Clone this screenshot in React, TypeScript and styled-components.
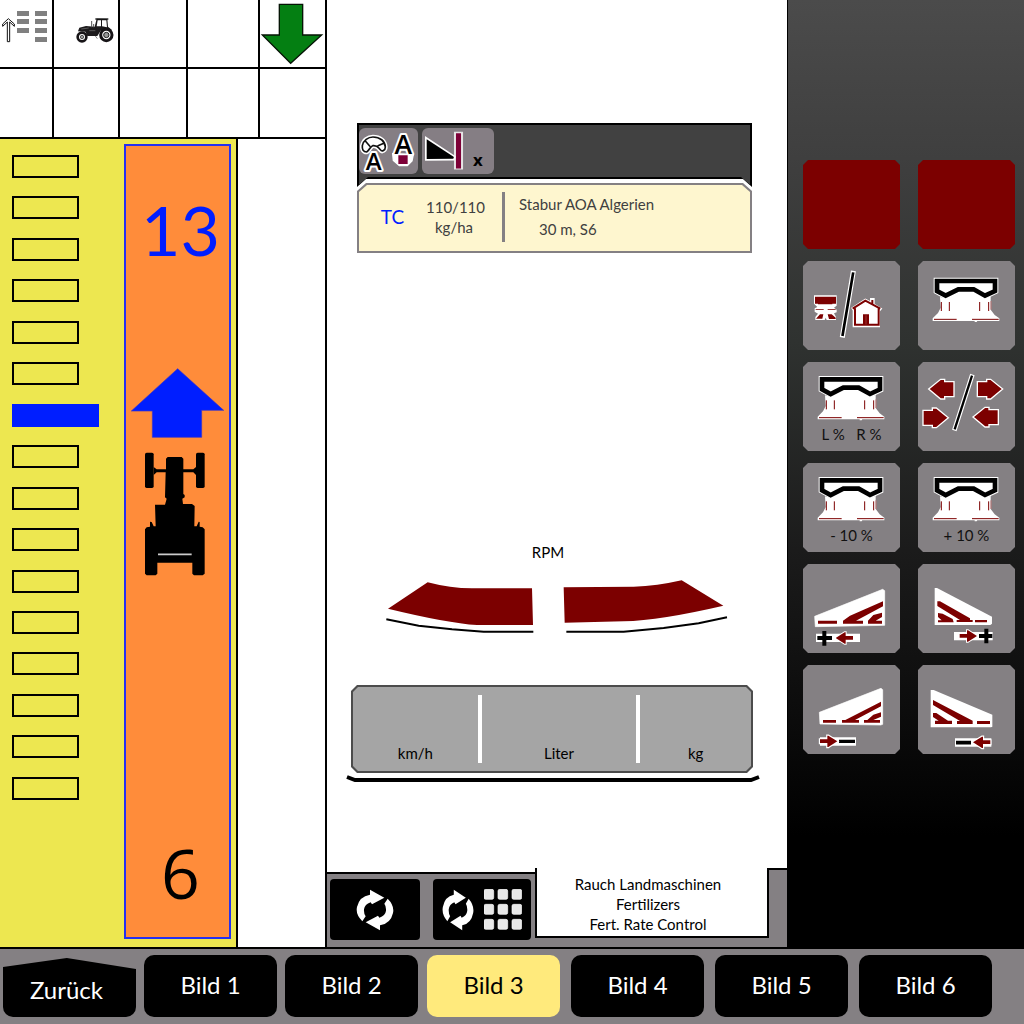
import React from 'react';
import styled, { createGlobalStyle, css } from 'styled-components';

const GlobalStyle = createGlobalStyle`
  * { box-sizing: border-box; }
  body { margin: 0; background: #fff; font-family: Lato, 'Open Sans', sans-serif; color: #000; }
  button { font: inherit; color: inherit; border: 0; padding: 0; margin: 0; cursor: pointer; }
  svg { display: block; }
  p, h2 { margin: 0; font-weight: 400; }
`;

const RED = '#7c0000';
const GREY = '#848083';
const BLUE = '#001eff';

const chamfer = (cut: number) => css`
  clip-path: polygon(
    ${cut}px 0, calc(100% - ${cut}px) 0, 100% ${cut}px, 100% calc(100% - ${cut}px),
    calc(100% - ${cut}px) 100%, ${cut}px 100%, 0 calc(100% - ${cut}px), 0 ${cut}px
  );
`;

const Screen = styled.div`
  min-height: 100vh;
  display: flex;
  flex-direction: column;
`;

const Main = styled.main`
  flex: 1;
  display: flex;
`;

/* ---------- left: status grid and field map ---------- */

const MapSide = styled.section`
  width: 327px;
  display: flex;
  flex-direction: column;
  border-right: 2px solid #000;
  border-bottom: 2px solid #000;
`;

const StatusGrid = styled.div`
  display: grid;
  grid-template-columns: 54px 66px 68px 72px 1fr;
  grid-template-rows: 69px 70px;
`;

const StatusCell = styled.div<{ $last?: boolean }>`
  display: flex;
  border-bottom: 2px solid #000;
  border-right: ${(p) => (p.$last ? '0' : '2px solid #000')};
`;

const StatusIcon = styled.svg`
  flex: none;
`;

const Field = styled.div`
  flex: 1;
  display: flex;
`;

const Track = styled.div`
  width: 238px;
  display: flex;
  padding: 5px 5px 8px 12px;
  background: #ede750;
  border-right: 2px solid #000;
`;

const Sections = styled.ul`
  list-style: none;
  margin: 0;
  padding: 11px 0 139px;
  width: 112px;
  display: flex;
  flex-direction: column;
  justify-content: space-between;
`;

const Section = styled.li<{ $active?: boolean }>`
  height: 23px;
  width: ${(p) => (p.$active ? 87 : 67)}px;
  border: 2px solid ${(p) => (p.$active ? BLUE : '#000')};
  background: ${(p) => (p.$active ? BLUE : 'transparent')};
`;

const Lane = styled.div`
  flex: 1;
  display: flex;
  flex-direction: column;
  align-items: center;
  background: #ff8c3a;
  border: 2px solid #2430f0;
  padding: 44px 0 24px;
`;

const LaneNumber = styled.span<{ $color: string; $font: string }>`
  color: ${(p) => p.$color};
  font-family: ${(p) => p.$font}, sans-serif;
  font-size: 68px;
  line-height: 80px;
  padding-left: 6px;
`;

const LaneArrow = styled.svg`
  margin-top: 98px;
`;

const LaneTractor = styled.svg`
  margin: 14px 6px 0 0;
`;

const Spacer = styled.div`
  flex: 1;
`;

/* ---------- centre: spreader ---------- */

const Work = styled.section`
  flex: 1;
  display: flex;
  flex-direction: column;
  background: #fff;
  border-right: 1px solid #000;
  border-bottom: 2px solid #000;
`;

const Job = styled.div`
  padding: 123px 35px 0 30px;
`;

const notch = css`
  clip-path: polygon(0 0, 100% 0, 100% 100%, calc(100% - 9px) calc(100% - 8px), 9px calc(100% - 8px), 0 100%);
`;

const ModeFrame = styled.div`
  background: #000;
  height: 64px;
  padding: 2px;
  ${notch}
`;

const ModeBar = styled.div`
  height: 100%;
  display: flex;
  gap: 4px;
  padding: 3px 0 0;
  background: #414141;
  ${notch}
`;

const ModeButton = styled.button`
  height: 46px;
  border-radius: 6px;
  background: #857e84;
`;

const ModeIcon = styled.svg`
  overflow: visible;
`;

const JobFrame = styled.div`
  margin-top: -4px;
  padding: 2px;
  background: ${GREY};
  clip-path: polygon(9px 0, calc(100% - 9px) 0, 100% 8px, 100% 100%, 0 100%, 0 8px);
`;

const JobCard = styled.div`
  display: flex;
  align-items: center;
  height: 66px;
  padding-bottom: 2px;
  background: #fef6cf;
  color: #404040;
  font-size: 15px;
  line-height: 20px;
  clip-path: polygon(8px 0, calc(100% - 8px) 0, 100% 7px, 100% 100%, 0 100%, 0 7px);
`;

const JobMode = styled.span`
  width: 67px;
  text-align: center;
  color: ${BLUE};
  font-size: 19px;
`;

const JobRate = styled.p`
  width: 56px;
  text-align: center;
`;

const JobRule = styled.div`
  width: 3px;
  height: 50px;
  margin: 0 14px 0 20px;
  background: ${GREY};
`;

const JobInfo = styled.div`
  line-height: 25px;
`;

const JobDetail = styled.p`
  padding-left: 20px;
`;

const Gauges = styled.div`
  padding: 0 27px 85px 19px;
  display: flex;
  flex-direction: column;
  align-items: center;
`;

const GaugeTitle = styled.h2`
  font-size: 15px;
  line-height: 20px;
  padding-right: 10px;
`;

const Blades = styled.svg`
  margin: 16px 0 49px 8px;
`;

const TotalsFrame = styled.div`
  width: calc(100% - 12px);
  margin-right: 2px;
  padding: 2px;
  background: #4c4c4c;
  ${chamfer(6)}
`;

const Totals = styled.div`
  display: flex;
  align-items: center;
  height: 84px;
  background: #a5a5a5;
  font-size: 15px;
  line-height: 20px;
  ${chamfer(5)}
`;

const Total = styled.span<{ $grow: number }>`
  flex: ${(p) => p.$grow} 1 0;
  align-self: flex-end;
  padding-bottom: 8px;
  text-align: center;
`;

const TotalRule = styled.div`
  width: 4px;
  height: 68px;
  background: #fff;
`;

const Base = styled.svg`
  width: 100%;
  height: 8px;
  margin-top: 2px;
`;

const Dock = styled.div`
  display: flex;
  align-items: flex-end;
`;

const DockTools = styled.div`
  display: flex;
  gap: 13px;
  height: 75px;
  padding: 5px 4px 7px 3px;
  background: ${GREY};
  border-top: 2px solid #000;
`;

const DockButton = styled.button<{ $width: number }>`
  width: ${(p) => p.$width}px;
  display: flex;
  align-items: center;
  justify-content: center;
  gap: 10px;
  background: #000;
  border-radius: 4px;
`;

const Implement = styled.div`
  flex: 1;
  height: 79px;
  padding-bottom: 9px;
  background: ${GREY};
`;

const ImplementText = styled.p`
  height: 70px;
  padding: 6px 8px 0 0;
  background: #fff;
  border: solid #000;
  border-width: 0 2px 2px;
  text-align: center;
  font-size: 15px;
  line-height: 20px;
`;

const DockEdge = styled.div`
  width: 18px;
  height: 79px;
  background: ${GREY};
  border-top: 2px solid #000;
`;

/* ---------- right: soft keys ---------- */

const SoftKeys = styled.aside`
  width: 236px;
  padding: 160px 9px 0 15px;
  background: linear-gradient(#4b4b4b 0%, #3e3e3e 18%, #2f3230 36%, #1b1b1b 58%, #0c0c0c 75%, #000 88%);
`;

const KeyGrid = styled.div`
  display: grid;
  grid-template-columns: 1fr 1fr;
  grid-auto-rows: 89px;
  gap: 12px 18px;
`;

const Key = styled.button<{ $alert?: boolean }>`
  display: flex;
  flex-direction: column;
  align-items: center;
  background: ${(p) => (p.$alert ? RED : GREY)};
  font-size: 15px;
  line-height: 20px;
  color: #111;
  ${chamfer(5)}
`;

const KeyLabel = styled.span`
  white-space: pre;
`;

/* ---------- bottom navigation ---------- */

const Tabs = styled.nav`
  height: 75px;
  display: flex;
  gap: 9px;
  padding: 6px 3px 7px;
  background: ${GREY};
`;

const TabGroup = styled.div<{ $gap: number }>`
  display: flex;
  gap: ${(p) => p.$gap}px;
`;

const Tab = styled.button<{ $active?: boolean; $back?: boolean }>`
  width: 133px;
  padding-bottom: 2px;
  font-size: 24px;
  line-height: 32px;
  border-radius: 10px;
  color: ${(p) => (p.$active ? '#000' : '#fff')};
  background: ${(p) => (p.$active ? '#ffea7c' : '#000')};
  ${(p) =>
    p.$back &&
    css`
      padding: 8px 6px 0 0;
      clip-path: polygon(0 12px, 48% 3px, 100% 14px, 100% 100%, 0 100%);
    `}
`;

/* ---------- drawings ---------- */

const KeyIcon = ({ height = 89, x = 0, y = 0, children }: { height?: number; x?: number; y?: number; children: React.ReactNode }) => (
  <svg width="97" height={height} viewBox={`${x} ${y} 291 ${height * 3}`} aria-hidden="true">
    {children}
  </svg>
);

const Spreader = () => (
  <g>
    <path d="M66 108 84 112 120 88H165L203 112 218 106V146L230 162 244 172V180H178L176 183H170V180H44V172L60 156 68 140Z" fill="#fff" />
    <path d="M57 60H231V90L201 104 167 85H121L83 104 57 90Z" fill="#fff" stroke="#fff" strokeWidth="20" />
    <path d="M57 60H231V90L201 104 167 85H121L83 104 57 90Z" fill="#fff" stroke="#000" strokeWidth="14" />
    <path d="M70 123V150M94 123V150M185 123V150M212 123V150M48 175H116M162 175H242" fill="none" stroke={RED} strokeWidth="3" />
    <path d="M219 120V146" stroke="#b77" strokeWidth="3" />
  </g>
);

const HomeIcon = () => (
  <KeyIcon x={39} y={332}>
    <path d="M72 435H140V466L132 472 140 478V486L132 489 138 500V509H110L107 502 104 509H76V500L84 490 74 484V474L82 470 72 460Z" fill="#fff" />
    <path d="M75 439H138V460H127V462H84V460H75ZM77 477H101V479H77ZM113 477H137V479H113ZM90 492H100L97 505H78ZM113 492H125L137 502V506H117Z" fill={RED} />
    <path d="M189 369 158 554" stroke="#fff" strokeWidth="15" strokeLinecap="square" />
    <path d="M189 370 158 553" stroke="#000" strokeWidth="8" strokeLinecap="square" />
    <path d="M186 473 226 447 242 455V445H252V462L274 475 268 482V529H190V480Z" fill="#fff" stroke="#fff" strokeWidth="4" />
    <path d="M188 475 226 451 271 475M195 474V523H266V474M247 460V449" fill="none" stroke={RED} strokeWidth="6" />
    <path d="M219 492H237V523H219Z" fill={RED} />
    <path d="M228 495V522" stroke="#a55" strokeWidth="2" />
  </KeyIcon>
);

const keyArrow = 'M0 32 36 3H48V10H76V55H48V62H36Z';

const DirectionIcon = () => (
  <KeyIcon x={384} y={36}>
    <g fill={RED} stroke="#fff" strokeWidth="4">
      <path d={keyArrow} transform="translate(416 85)" />
      <path d={keyArrow} transform="translate(638 85) scale(-1 1)" />
      <path d={keyArrow} transform="translate(475 171) scale(-1 1)" />
      <path d={keyArrow} transform="translate(549 169)" />
    </g>
    <path d="M545 80 495 235" stroke="#fff" strokeWidth="14" strokeLinecap="square" />
    <path d="M545 80 495 235" stroke="#000" strokeWidth="7" strokeLinecap="square" />
  </KeyIcon>
);

const Wedge = ({ small }: { small?: boolean }) => (
  <g>
    <path d={small ? 'M88 472 273 400 278 404V508L272 510 90 507Z' : 'M74 182 278 101 284 105V209L76 213Z'} fill="#fff" stroke="#fff" strokeWidth="2" strokeLinejoin="round" />
    <path
      d={
        small
          ? 'M99 495H138V503H99ZM156 495H166L273 440V454L195 495H207V503H156ZM222 495H232L250 479 273 472V485L250 495H270V503H222Z'
          : 'M84 195H141V204H84ZM159 195L180 180 279 137V152L198 195H219V204H159ZM234 195 250 178 276 171V184L257 195H276V204H234Z'
      }
      fill={RED}
    />
  </g>
);

const signArrow = 'M137 247 164 230H167V241H189V252H167V264H164Z';

const LeftPlus = () => (
  <KeyIcon x={39} y={25}>
    <Wedge />
    <path d="M78 234H210V259H78Z" fill="#fff" />
    <path d="M82 247H126M103 226V270" stroke="#000" strokeWidth="12" />
    <path d={signArrow} fill={RED} stroke="#fff" strokeWidth="6" paintOrder="stroke" />
  </KeyIcon>
);

const RightPlus = () => (
  <KeyIcon x={384} y={25}>
    <path d="M434 97H441L606 183V204L601 208H434Z" fill="#fff" />
    <path d="M442 137H450L540 188V193H548V199H500V193H510L442 151ZM444 172 458 174 488 190 491 200H444V194H455L444 184ZM555 193H591V200H555Z" fill={RED} />
    <path d="M492 229H608V254H492Z" fill="#fff" />
    <path d="M567 241H607M589 219V263" stroke="#000" strokeWidth="12" />
    <path d={signArrow} transform="translate(698 -6) scale(-1 1)" fill={RED} stroke="#fff" strokeWidth="6" paintOrder="stroke" />
  </KeyIcon>
);

const LeftMinus = () => (
  <KeyIcon x={39} y={330}>
    <Wedge small />
    <path d="M90 547H198V572H90Z" fill="#fff" />
    <path d="M147 559H195" stroke="#000" strokeWidth="10" />
    <path d={signArrow} transform="translate(279 312) scale(-1 1)" fill={RED} stroke="#fff" strokeWidth="7" paintOrder="stroke" />
  </KeyIcon>
);

const RightMinus = () => (
  <KeyIcon x={384} y={330}>
    <path d="M422 405H431L607 479V515L603 517H422Z" fill="#fff" />
    <path d="M429 435 548 497V507H501V498H510L429 450ZM429 474H439L474 497H486V507H435V497H446L429 486ZM561 498H600V507H561Z" fill={RED} />
    <path d="M495 550H604V575H495Z" fill="#fff" />
    <path d="M498 563H543" stroke="#000" strokeWidth="11" />
    <path d={signArrow} transform="translate(412 315)" fill={RED} stroke="#fff" strokeWidth="7" paintOrder="stroke" />
  </KeyIcon>
);

const refreshArrow = 'M43 133Q22 112 27 90 34 58 66 53V38L109 62 72 82 68 76Q50 82 48 97 47 110 53 118Z';

const Refresh = ({ width = 38 }: { width?: number }) => (
  <svg width={width} height="42" viewBox="24 36 114 126" preserveAspectRatio="none" aria-hidden="true">
    <path d={refreshArrow} fill="#fff" />
    <path d={refreshArrow} fill="#fff" transform="rotate(180 81 99)" />
  </svg>
);

const Apps = () => (
  <svg width="38" height="41" viewBox="0 0 114 123" aria-hidden="true">
    {[0, 42, 84].map((x) =>
      [1, 46, 91].map((y) => <rect key={`${x}-${y}`} x={x} y={y} width="29" height="30" rx="5" fill="#e8e8e8" stroke="#fff" strokeWidth="2" />),
    )}
  </svg>
);

const AutoSteer = () => (
  <ModeIcon width="59" height="46" viewBox="43 39 177 138" aria-hidden="true">
    <g fill="none" strokeLinejoin="round" strokeLinecap="round">
      <path d="M53 92C56 76 70 66 85 66 106 66 121 78 122 96 122 106 112 112 107 104 100 98 100 90 84 92 75 95 75 106 66 111 55 111 52 102 53 92Z" fill="#fff" stroke="#fff" strokeWidth="14" />
      <path d="M53 92C56 76 70 66 85 66 106 66 121 78 122 96 122 106 112 112 107 104 100 98 100 90 84 92 75 95 75 106 66 111 55 111 52 102 53 92ZM62 78 75 93M100 92 119 84" stroke="#111" strokeWidth="5" />
    </g>
    <path d="M144 116 206 118 202 138 188 152H164L146 136Z" fill="#fff" stroke="#fff" strokeWidth="4" />
    <g fontFamily="'Open Sans', sans-serif" fontWeight="600" textAnchor="middle" stroke="#fff" strokeWidth="12" strokeLinejoin="round" paintOrder="stroke">
      <text x="87" y="165" fontSize="72">A</text>
      <text x="176" y="118" fontSize="80">A</text>
    </g>
    <path d="M161 121H189V147H161Z" fill="#7d0037" />
  </ModeIcon>
);

const Boundary = () => (
  <ModeIcon width="72" height="46" viewBox="233 41 214 136" aria-hidden="true">
    <path d="M247 74 328 127 326 132 247 133Z" fill="#000" stroke="#fff" strokeWidth="10" paintOrder="stroke" />
    <path d="M328 52H355V164H328Z" fill="#fff" opacity=".8" />
    <path d="M334 56H349V161H334Z" fill="#7d0037" />
    <text x="399" y="153" fontSize="50" fontFamily="'Open Sans', sans-serif" fontWeight="700" textAnchor="middle">x</text>
  </ModeIcon>
);

const SectionStatus = () => (
  <StatusIcon width="52" height="66" viewBox="0 0 156 198" aria-hidden="true">
    <path d="M22 125V66L8 79V72L25 56 43 72V79L29 66V125Z" fill="#fff" stroke="#111" strokeWidth="3" />
    <path d="M51 33H87V48H51ZM51 57H87V72H51ZM51 84H87V99H51ZM105 33H141V48H105ZM105 57H141V72H105ZM105 84H141V99H105ZM105 111H141V126H105Z" fill="#808080" />
  </StatusIcon>
);

const SideTractor = () => (
  <StatusIcon width="64" height="66" viewBox="162 0 192 198" aria-hidden="true">
    <path d="M238 83 258 78 284 80 290 56 322 57 324 80 336 90 330 96 302 92 292 108H262L256 95 234 94Z" fill="#1c1a1c" />
    <path d="M293 61H303V79H290ZM306 61H319L321 82 306 79Z" fill="#fff" />
    <path d="M286 57H325" stroke="#111" strokeWidth="4" />
    <path d="M275 63V82M281 72V82" stroke="#555" strokeWidth="3" />
    <path d="M244 87 266 84M268 92H286" stroke="#777" strokeWidth="2" />
    <circle cx="319" cy="105" r="17" fill="#fff" stroke="#171417" strokeWidth="9" />
    <circle cx="319" cy="105" r="8" fill="#999" stroke="#222" strokeWidth="3" />
    <circle cx="246" cy="111" r="13" fill="#fff" stroke="#171417" strokeWidth="8" />
    <circle cx="246" cy="111" r="5" fill="#999" stroke="#222" strokeWidth="2" />
    <path d="M286 108 292 116" stroke="#888" strokeWidth="3" />
  </StatusIcon>
);

const DownArrow = () => (
  <StatusIcon width="65" height="66" viewBox="780 0 195 198" aria-hidden="true">
    <path d="M838 13H908V105H965L872 190 787 105H838Z" fill="#047f12" stroke="#051405" strokeWidth="4" />
  </StatusIcon>
);

const sections = Array.from({ length: 16 }, (_, i) => i + 1);
const ACTIVE_SECTION = 7;

export default function App() {
  return (
    <Screen>
      <GlobalStyle />
      <Main>
        <MapSide>
          <StatusGrid>
            <StatusCell><SectionStatus /></StatusCell>
            <StatusCell><SideTractor /></StatusCell>
            <StatusCell />
            <StatusCell />
            <StatusCell $last><DownArrow /></StatusCell>
            <StatusCell />
            <StatusCell />
            <StatusCell />
            <StatusCell />
            <StatusCell $last />
          </StatusGrid>
          <Field>
            <Track>
              <Sections>
                {sections.map((n) => (
                  <Section key={n} $active={n === ACTIVE_SECTION} />
                ))}
              </Sections>
              <Lane>
                <LaneNumber $color={BLUE} $font="Lato">13</LaneNumber>
                <LaneArrow width="93" height="70" viewBox="92 84 279 210" aria-hidden="true">
                  <path d="M232 86 370 211H304V292H156V213H93Z" fill={BLUE} stroke="#3a35c8" strokeWidth="2" />
                </LaneArrow>
                <LaneTractor width="60" height="124" viewBox="135 338 180 372" aria-hidden="true">
                  <g fill="#000">
                    <rect x="135" y="340" width="26" height="106" rx="5" />
                    <rect x="288" y="340" width="26" height="106" rx="5" />
                    <path d="M161 383 170 390H198V358L203 353H245L250 358V390H280L288 383V407L280 399H250V464L254 467V474L247 478 249 494H276L284 500 283 561H290L296 547 299 548V562L308 564 314 570V703L308 708H282L277 703V670H172V703L167 708H140L135 703V570L140 564 150 562V547L155 548 161 561H167L165 496H195L200 478 195 474 197 399H170L161 407Z" />
                  </g>
                  <path d="M174 645H275" stroke="#ccc" strokeWidth="5" />
                </LaneTractor>
                <Spacer />
                <LaneNumber $color="#000" $font="'Open Sans'">6</LaneNumber>
              </Lane>
            </Track>
          </Field>
        </MapSide>

        <Work>
          <Job>
            <ModeFrame>
              <ModeBar>
                <ModeButton aria-label="Automatik"><AutoSteer /></ModeButton>
                <ModeButton aria-label="Feldgrenze"><Boundary /></ModeButton>
              </ModeBar>
            </ModeFrame>
            <JobFrame>
              <JobCard>
                <JobMode>TC</JobMode>
                <JobRate>110/110<br />kg/ha</JobRate>
                <JobRule />
                <JobInfo>
                  <p>Stabur AOA Algerien</p>
                  <JobDetail>30 m, S6</JobDetail>
                </JobInfo>
              </JobCard>
            </JobFrame>
          </Job>
          <Spacer />
          <Gauges>
            <GaugeTitle>RPM</GaugeTitle>
            <Blades width="342" height="58" viewBox="137 144 1026 174" aria-hidden="true">
              <path d="M143 236 262 157Q330 175 395 175H575L578 285H410Q320 279 143 236Z" fill={RED} />
              <path d="M670 172 880 170Q950 168 1024 151L1149 227Q960 271 850 274L673 278Z" fill={RED} />
              <path d="M138 268 235 287 335 298 430 305H579M678 305H850L970 294 1075 280 1160 262" fill="none" stroke="#000" strokeWidth="6" />
            </Blades>
            <TotalsFrame>
              <Totals>
                <Total $grow={125}>km/h</Total>
                <TotalRule />
                <Total $grow={155}>Liter</Total>
                <TotalRule />
                <Total $grow={111}>kg</Total>
              </Totals>
            </TotalsFrame>
            <Base viewBox="0 0 414 8" preserveAspectRatio="none" aria-hidden="true">
              <path d="M1 2 9 5H405L413 2" fill="none" stroke="#000" strokeWidth="4" />
            </Base>
          </Gauges>
          <Dock>
            <DockTools>
              <DockButton $width={90} aria-label="Wechseln"><Refresh /></DockButton>
              <DockButton $width={98} aria-label="Übersicht"><Refresh width={32} /><Apps /></DockButton>
            </DockTools>
            <Implement>
              <ImplementText>
                Rauch Landmaschinen<br />Fertilizers<br />Fert. Rate Control
              </ImplementText>
            </Implement>
            <DockEdge />
          </Dock>
        </Work>

        <SoftKeys>
          <KeyGrid>
            <Key $alert aria-label="Stopp links" />
            <Key $alert aria-label="Stopp rechts" />
            <Key aria-label="Home"><HomeIcon /></Key>
            <Key aria-label="Streuer"><KeyIcon><Spreader /></KeyIcon></Key>
            <Key><KeyIcon height={62} y={8}><Spreader /></KeyIcon><KeyLabel>{'L %   R %'}</KeyLabel></Key>
            <Key aria-label="Richtung"><DirectionIcon /></Key>
            <Key><KeyIcon height={62} y={8}><Spreader /></KeyIcon><KeyLabel>- 10 %</KeyLabel></Key>
            <Key><KeyIcon height={62} y={8}><Spreader /></KeyIcon><KeyLabel>+ 10 %</KeyLabel></Key>
            <Key aria-label="Links plus"><LeftPlus /></Key>
            <Key aria-label="Rechts plus"><RightPlus /></Key>
            <Key aria-label="Links minus"><LeftMinus /></Key>
            <Key aria-label="Rechts minus"><RightMinus /></Key>
          </KeyGrid>
        </SoftKeys>
      </Main>

      <Tabs>
        <TabGroup $gap={8}>
          <Tab $back>Zurück</Tab>
          <Tab>Bild 1</Tab>
          <Tab>Bild 2</Tab>
        </TabGroup>
        <TabGroup $gap={11}>
          <Tab $active>Bild 3</Tab>
          <Tab>Bild 4</Tab>
          <Tab>Bild 5</Tab>
          <Tab>Bild 6</Tab>
        </TabGroup>
      </Tabs>
    </Screen>
  );
}
